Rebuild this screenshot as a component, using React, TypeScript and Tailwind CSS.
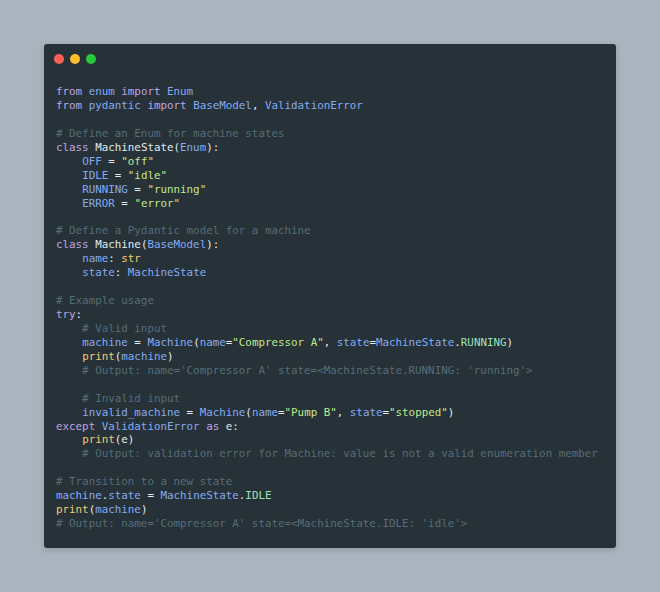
import React from "react";

type Tok = [string, keyof typeof C];

const C = {
  k: "text-[#c0a4e0]",
  b: "text-[#86aaf2]",
  s: "text-[#c3e88d]",
  y: "text-[#f7c96f]",
  w: "text-[#e3ebee]",
  g: "text-[#9fe0b8]",
  c: "text-[#566c77]",
};

const lines: Tok[][] = [
  [["from", "k"], [" ", "w"], ["enum", "b"], [" ", "w"], ["import", "k"], [" ", "w"], ["Enum", "b"]],
  [["from", "k"], [" ", "w"], ["pydantic", "b"], [" ", "w"], ["import", "k"], [" ", "w"], ["BaseModel", "b"], [", ", "w"], ["ValidationError", "b"]],
  [],
  [["# Define an Enum for machine states", "c"]],
  [["class", "k"], [" MachineState(", "w"], ["Enum", "b"], ["):", "w"]],
  [["    ", "w"], ["OFF", "b"], [" = ", "w"], ["\"off\"", "s"]],
  [["    ", "w"], ["IDLE", "b"], [" = ", "w"], ["\"idle\"", "s"]],
  [["    ", "w"], ["RUNNING", "b"], [" = ", "w"], ["\"running\"", "s"]],
  [["    ", "w"], ["ERROR", "b"], [" = ", "w"], ["\"error\"", "s"]],
  [],
  [["# Define a Pydantic model for a machine", "c"]],
  [["class", "k"], [" Machine(", "w"], ["BaseModel", "b"], ["):", "w"]],
  [["    ", "w"], ["name", "b"], [": ", "w"], ["str", "y"]],
  [["    ", "w"], ["state", "b"], [": ", "w"], ["MachineState", "b"]],
  [],
  [["# Example usage", "c"]],
  [["try", "k"], [":", "w"]],
  [["    # Valid input", "c"]],
  [["    ", "w"], ["machine", "b"], [" = ", "w"], ["Machine", "b"], ["(", "w"], ["name", "b"], ["=", "w"], ["\"Compressor A\"", "s"], [", ", "w"], ["state", "b"], ["=", "w"], ["MachineState", "b"], [".", "w"], ["RUNNING", "g"], [")", "w"]],
  [["    ", "w"], ["print", "y"], ["(", "w"], ["machine", "b"], [")", "w"]],
  [["    # Output: name='Compressor A' state=<MachineState.RUNNING: 'running'>", "c"]],
  [],
  [["    # Invalid input", "c"]],
  [["    ", "w"], ["invalid_machine", "b"], [" = ", "w"], ["Machine", "b"], ["(", "w"], ["name", "b"], ["=", "w"], ["\"Pump B\"", "s"], [", ", "w"], ["state", "b"], ["=", "w"], ["\"stopped\"", "s"], [")", "w"]],
  [["except", "k"], [" ", "w"], ["ValidationError", "b"], [" ", "w"], ["as", "k"], [" e:", "w"]],
  [["    ", "w"], ["print", "y"], ["(", "w"], ["e", "w"], [")", "w"]],
  [["    # Output: validation error for Machine: value is not a valid enumeration member", "c"]],
  [],
  [["# Transition to a new state", "c"]],
  [["machine", "b"], [".", "w"], ["state", "b"], [" = ", "w"], ["MachineState", "b"], [".", "w"], ["IDLE", "g"]],
  [["print", "y"], ["(", "w"], ["machine", "b"], [")", "w"]],
  [["# Output: name='Compressor A' state=<MachineState.IDLE: 'idle'>", "c"]],
];

export default function App() {
  return (
    <div className="w-full h-[592px] bg-[#a9b4bf] flex justify-center items-start pt-[44px]">
      <div className="w-[572px] h-[504px] bg-[#263238] rounded-[3px] flex flex-col shadow-[0_2px_6px_rgba(0,0,0,0.15)]">
        <div className="flex gap-[6px] pl-[10px] pt-[10px]">
          <span className="w-[10px] h-[10px] rounded-full bg-[#ff5f56]" />
          <span className="w-[10px] h-[10px] rounded-full bg-[#ffbd2e]" />
          <span className="w-[10px] h-[10px] rounded-full bg-[#27c93f]" />
        </div>
        <pre
          className="mt-[21px] pl-[12px] text-[10.85px] leading-[13.94px] whitespace-pre"
          style={{ fontFamily: '"DejaVu Sans Mono", "Liberation Mono", monospace' }}
        >
          {lines.map((l, i) => (
            <div key={i} className="h-[13.94px]">
              {l.map((t, j) => (
                <span key={j} className={C[t[1]]}>
                  {t[0]}
                </span>
              ))}
            </div>
          ))}
        </pre>
      </div>
    </div>
  );
}
